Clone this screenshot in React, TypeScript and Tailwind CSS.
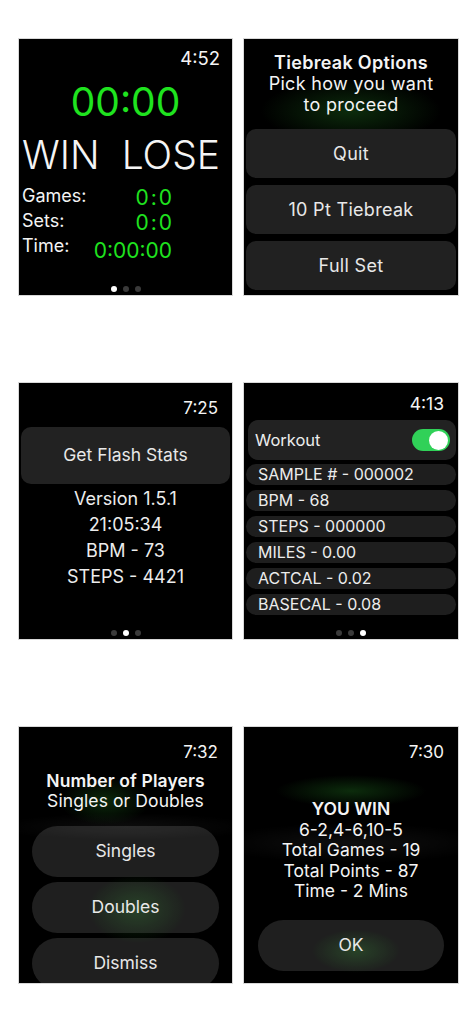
import React from "react";

const GREEN = "text-[#1fe31f]";

function Dots({ active }: { active: number }) {
  return (
    <div className="flex justify-center gap-[6px]">
      {[0, 1, 2].map((i) => (
        <span
          key={i}
          className={
            i === active
              ? "block w-[6px] h-[6px] rounded-full bg-white"
              : "block w-[6px] h-[6px] rounded-full bg-[#3a3a3a]"
          }
        />
      ))}
    </div>
  );
}

function Panel({ children, className = "" }: { children: React.ReactNode; className?: string }) {
  return (
    <div
      className={
        "h-[256px] bg-black overflow-hidden flex flex-col text-[#f4f4f4] ring-1 ring-[#d8d8d8] " + className
      }
    >
      {children}
    </div>
  );
}

function ScorePanel() {
  return (
    <Panel className="pt-[9px] pb-[3px]">
      <div className="text-right pr-[12px] text-[18.5px] leading-[20px]">4:52</div>
      <div className={"mt-[14px] text-center text-[39px] leading-[40px] " + GREEN}>00:00</div>
      <div className="mt-[13px] flex justify-between pl-[3px] pr-[12px] text-[39px] leading-[40px] font-light">
        <span>WIN</span>
        <span>LOSE</span>
      </div>
      <div className="mt-[8px] w-[153px] flex flex-col">
        <div className="h-[25px] flex justify-between items-start pl-[3px]">
          <span className="text-[18px] leading-[25px]">Games:</span>
          <span className={"mt-[2px] text-[21px] leading-[25px] " + GREEN}>
            0<span className="mx-[2px]">:</span>0
          </span>
        </div>
        <div className="h-[25px] flex justify-between items-start pl-[3px]">
          <span className="text-[18px] leading-[25px]">Sets:</span>
          <span className={"mt-[2px] text-[21px] leading-[25px] " + GREEN}>
            0<span className="mx-[2px]">:</span>0
          </span>
        </div>
        <div className="h-[25px] flex justify-between items-start pl-[3px]">
          <span className="text-[18px] leading-[25px]">Time:</span>
          <span className={"mt-[5px] text-[21px] leading-[25px] " + GREEN}>0:00:00</span>
        </div>
      </div>
      <div className="mt-auto">
        <Dots active={0} />
      </div>
    </Panel>
  );
}

function TiebreakPanel() {
  return (
    <Panel className="pt-[13px] px-[2px] bg-[radial-gradient(ellipse_90px_32px_at_107px_72px,rgba(22,80,22,0.55),transparent)]">
      <div className="text-center text-[18px] leading-[21px] tracking-[0.3px]">
        <div className="font-semibold">Tiebreak Options</div>
        <div>
          Pick how you want
          <br />
          to proceed
        </div>
      </div>
      <div className="mt-[14px] flex flex-col gap-[7px]">
        {["Quit", "10 Pt Tiebreak", "Full Set"].map((t) => (
          <div
            key={t}
            className="h-[49px] rounded-[10px] bg-[#212121] flex items-center justify-center text-[18px] tracking-[0.3px] text-[#e8e8e8]"
          >
            {t}
          </div>
        ))}
      </div>
    </Panel>
  );
}

function FlashPanel() {
  return (
    <Panel className="pt-[16px] pb-[3px]">
      <div className="text-right pr-[14px] text-[17px] leading-[18px]">7:25</div>
      <div className="mt-[10px] mx-[2px] h-[57px] rounded-[10px] bg-[#222222] flex items-center justify-center text-[17.5px] text-[#e8e8e8]">
        Get Flash Stats
      </div>
      <div className="mt-[2px] text-center text-[18px] leading-[26px] text-[#ececec]">
        <div>Version 1.5.1</div>
        <div>21:05:34</div>
        <div>BPM - 73</div>
        <div>STEPS - 4421</div>
      </div>
      <div className="mt-auto">
        <Dots active={1} />
      </div>
    </Panel>
  );
}

function WorkoutPanel() {
  const rows = [
    "SAMPLE # - 000002",
    "BPM - 68",
    "STEPS - 000000",
    "MILES - 0.00",
    "ACTCAL - 0.02",
    "BASECAL - 0.08",
  ];
  return (
    <Panel className="pt-[11px] pb-[3px]">
      <div className="text-right pr-[14px] text-[17.5px] leading-[20px]">4:13</div>
      <div className="mt-[6px] ml-[4px] mr-[2px] h-[40px] rounded-[10px] bg-[#222222] flex items-center justify-between pl-[7px] pr-[6px]">
        <span className="text-[16.5px] text-[#ececec]">Workout</span>
        <span className="w-[38px] h-[22px] rounded-full bg-[#30d158] flex items-center justify-end pr-[2px]">
          <span className="block w-[19px] h-[19px] rounded-full bg-white" />
        </span>
      </div>
      <div className="mt-[4px] mx-[2px] flex flex-col gap-[5px]">
        {rows.map((r) => (
          <div
            key={r}
            className="h-[21px] rounded-full bg-[#1e1e1e] pl-[12px] text-[16px] leading-[21px] text-[#ececec]"
          >
            {r}
          </div>
        ))}
      </div>
      <div className="mt-auto">
        <Dots active={2} />
      </div>
    </Panel>
  );
}

function PlayersPanel() {
  return (
    <Panel className="pt-[16px] bg-[radial-gradient(ellipse_45px_24px_at_86px_74px,rgba(22,80,22,0.5),transparent),radial-gradient(ellipse_50px_35px_at_118px_182px,rgba(22,90,22,0.45),transparent),radial-gradient(ellipse_130px_14px_at_107px_100px,rgba(255,255,255,0.05),transparent)]">
      <div className="text-right pr-[14px] text-[17px] leading-[18px]">7:32</div>
      <div className="mt-[10px] text-center text-[17.5px] leading-[20px] tracking-[0.1px]">
        <div className="font-semibold">Number of Players</div>
        <div>Singles or Doubles</div>
      </div>
      <div className="mt-[15px] mx-[13px] flex flex-col gap-[5px]">
        {["Singles", "Doubles", "Dismiss"].map((t) => (
          <div
            key={t}
            className="h-[51px] shrink-0 rounded-full bg-[rgba(255,255,255,0.12)] flex items-center justify-center text-[17.5px] text-[#e8e8e8]"
          >
            {t}
          </div>
        ))}
      </div>
    </Panel>
  );
}

function WinPanel() {
  return (
    <Panel className="pt-[16px] bg-[radial-gradient(ellipse_75px_16px_at_107px_64px,rgba(22,80,22,0.55),transparent),radial-gradient(ellipse_140px_20px_at_107px_116px,rgba(255,255,255,0.06),transparent),radial-gradient(ellipse_45px_22px_at_112px_224px,rgba(22,90,22,0.45),transparent)]">
      <div className="text-right pr-[14px] text-[17px] leading-[18px]">7:30</div>
      <div className="mt-[38px] text-center text-[17.5px] leading-[20.5px]">
        <div className="font-semibold">YOU WIN</div>
        <div>6-2,4-6,10-5</div>
        <div>Total Games - 19</div>
        <div>Total Points - 87</div>
        <div>Time - 2 Mins</div>
      </div>
      <div className="mt-[18px] mx-[14px] h-[51px] shrink-0 rounded-full bg-[rgba(255,255,255,0.12)] flex items-center justify-center text-[17.5px] text-[#e8e8e8]">
        OK
      </div>
    </Panel>
  );
}

export default function App() {
  return (
    <div className="min-h-[1024px] w-[473px] bg-white pl-[19px] pt-[39px] font-[Inter,sans-serif]">
      <div className="grid grid-cols-[213px_214px] gap-x-[12px] gap-y-[88px]">
        <ScorePanel />
        <TiebreakPanel />
        <FlashPanel />
        <WorkoutPanel />
        <PlayersPanel />
        <WinPanel />
      </div>
    </div>
  );
}
